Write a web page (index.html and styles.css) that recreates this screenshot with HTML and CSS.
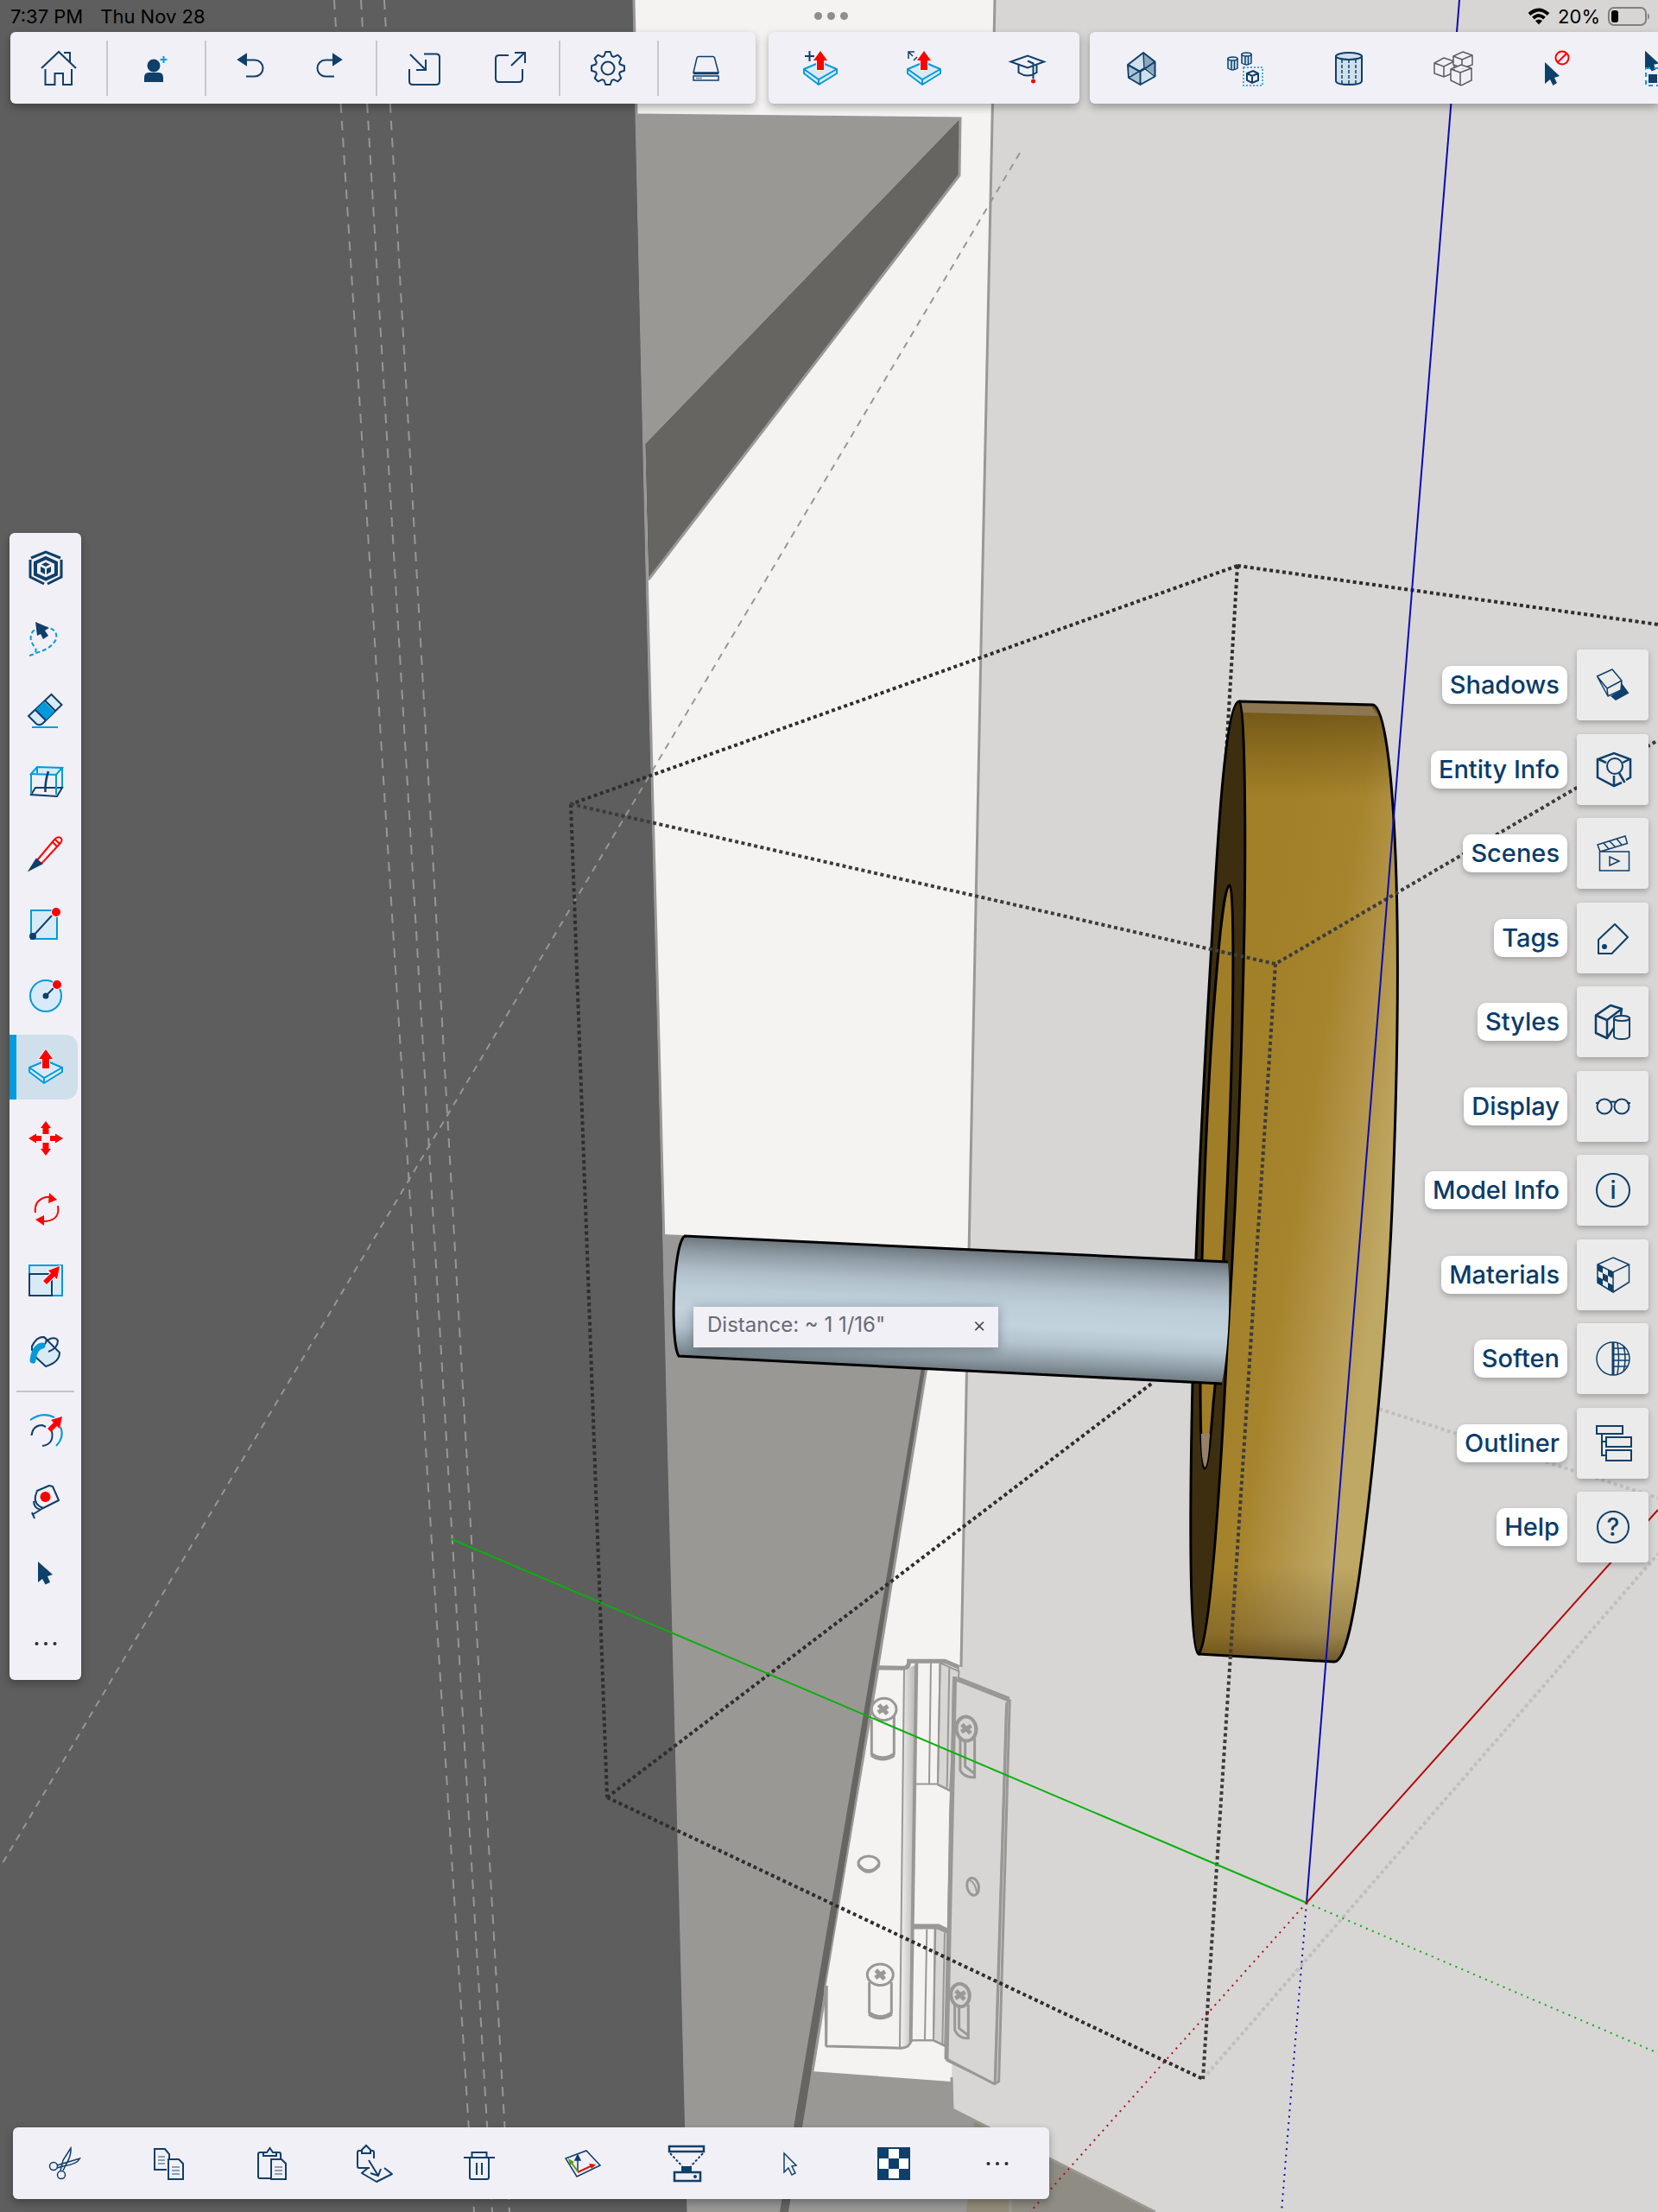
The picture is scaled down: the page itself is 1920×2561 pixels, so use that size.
FILE: index.html
```html
<!DOCTYPE html>
<html lang="en">
<head>
<meta charset="utf-8">
<meta name="viewport" content="width=device-width, initial-scale=1">
<title>Model editor</title>
<link rel="stylesheet" href="styles.css">
</head>
<body>
<main class="app">
  <!-- Modelling canvas -->
  <div class="canvas">
    <svg class="scene" viewBox="0 0 1920 2561" preserveAspectRatio="xMinYMin slice" aria-hidden="true">
      <defs>
        <linearGradient id="rod" gradientUnits="userSpaceOnUse" x1="1100" y1="1446" x2="1093" y2="1587">
          <stop offset="0" stop-color="#6c757c"/><stop offset=".12" stop-color="#8f9ba4"/><stop offset=".28" stop-color="#b0bec9"/><stop offset=".42" stop-color="#bccdd8"/><stop offset=".6" stop-color="#c2d3de"/><stop offset=".74" stop-color="#b4c4cf"/><stop offset=".9" stop-color="#8a98a1"/><stop offset="1" stop-color="#6c777e"/>
        </linearGradient>
        <linearGradient id="gold" gradientUnits="userSpaceOnUse" x1="1430" y1="1340" x2="1615" y2="1370">
          <stop offset="0" stop-color="#a28028"/><stop offset=".42" stop-color="#a6842d"/><stop offset=".7" stop-color="#b3954a"/><stop offset="1" stop-color="#bfa864"/>
        </linearGradient>
        <linearGradient id="goldShade" x1="0" y1="0" x2="0" y2="1">
          <stop offset="0" stop-color="#4b3508" stop-opacity=".6"/><stop offset=".1" stop-color="#5a3f0a" stop-opacity="0"/><stop offset=".9" stop-color="#5a4520" stop-opacity="0"/><stop offset=".97" stop-color="#5a4520" stop-opacity=".35"/><stop offset="1" stop-color="#4b3510" stop-opacity=".7"/>
        </linearGradient>
        <linearGradient id="curl"><stop offset="0" stop-color="#f4f3f1"/><stop offset="1" stop-color="#b4b3b0"/></linearGradient>
        <g id="cross"><path d="M-15 -13L15 13M-17 9L17 -9" stroke-width="5" vector-effect="non-scaling-stroke"/></g>
      </defs>

      <rect width="1920" height="2561" fill="#d7d6d4"/>
      <!-- cabinet side and back -->
      <polygon points="733,0 1152,0 1137,700 1123,1400 1113,1860 1102,2412 780,2412" fill="#f4f3f1"/>
      <polygon points="735,133 1112,137 747,514" fill="#999895"/>
      <polygon points="1112,137 1111,203 751,672 747,514" fill="#666562"/>
      <path d="M736 133L1112 137L1111 203L751 671" class="edge"/>
      <polygon points="768,1429 790,1430 1073,1500 1073,1583 1028,1860 940,2398 1101,2410 1103,2442 1338,2561 780,2561" fill="#999895"/>
      <polygon points="1067,1583 1073,1583 1028,1860 929,2463 913,2561 903,2561 919,2463 1021,1860" fill="#666562"/>
      <path d="M1073 1583L1028 1860L941 2398" class="edge"/>
      <polygon points="1128,2455 1148,2465 1170,2476 1170,2561 1119,2561" fill="#928b78"/>
      <polygon points="1170,2476 1338,2561 1170,2561" fill="#8f8c84"/>
      <path d="M1125 2453L1117 2561M1170 2476V2561" class="edge"/>
      <path d="M1152 0L1137 700L1123 1400L1113 1930M1102 2405L1103 2442L1338 2561" class="edge"/>
      <polygon points="0,0 733,0 749,700 767,1400 773,1660 793,2440 796,2561 0,2561" fill="#5e5e5e"/>
      <path d="M734 0L750 700L768 1400L774 1660L794 2440L797 2561" class="edge"/>

      <!-- hinge -->
      <g transform="translate(900 1860) scale(.3333 .3954)" class="hinge">
        <path d="M352 182L440 183Q460 180 460 160H580L630 180L605 600L590 1290L540 1270H465Q458 1292 430 1293L170 1287L165 1120Z" fill="#f4f3f1"/>
        <path d="M441 185L484 170L464 1275Q450 1292 426 1292Z" fill="url(#curl)" stroke="none"/>
        <path d="M566 165L632 190L600 540L558 522Z M548 940L592 955L583 1285L543 1270Z" fill="#d7d6d4"/>
        <path d="M352 179L440 180Q458 180 458 160H582L632 178" stroke-width="5"/>
        <path d="M484 165L464 1275" stroke-width="4"/>
        <path d="M441 185L426 1292M534 165L528 520M566 165L558 520L600 538M598 180L590 530M480 520H560M520 945L513 1268M550 940L543 1270L583 1286M582 955L574 1280M465 1270H543"/>
        <path d="M470 937H560L592 950" stroke-width="6"/>
        <path d="M170 1287L172 1110M170 1287L430 1293Q462 1292 466 1268" stroke-width="3"/>
        <path d="M625 215L805 272L795 290L755 1397L590 1330L612 215Z" fill="#d7d6d4"/>
        <path d="M625 212L805 272" stroke-width="6"/>
        <path d="M618 205L602 600L588 1325L755 1398L770 1390L808 272M798 280L758 1390" stroke-width="3"/>
        <path d="M617 205L588 1325" stroke-width="5"/>
        <path d="M328 330V432Q366 455 406 432V320M320 1100V1190Q358 1212 397 1190V1100" fill="#f4f3f1" stroke-width="3"/>
        <path d="M328 434Q366 456 406 434M320 1192Q358 1214 397 1192" stroke-width="5"/>
        <ellipse cx="371" cy="301" rx="43" ry="32" fill="#f4f3f1" stroke-width="3"/>
        <ellipse cx="358" cy="1078" rx="45" ry="31" fill="#f4f3f1" stroke-width="3"/>
        <ellipse cx="318" cy="752" rx="36" ry="21" fill="#f4f3f1" stroke-width="3"/>
        <path d="M282 756Q318 796 354 756" stroke-width="4"/>
        <path d="M636 380V480Q650 502 686 500V385M653 390V468L686 490M617 1165V1240Q632 1266 664 1264V1165M632 1170V1235L664 1256" stroke-width="3"/>
        <ellipse cx="657" cy="358" rx="34" ry="36" fill="#d7d6d4" stroke-width="4" transform="rotate(-30 657 358)"/>
        <ellipse cx="636" cy="1138" rx="32" ry="34" fill="#d7d6d4" stroke-width="4" transform="rotate(-30 636 1138)"/>
        <ellipse cx="680" cy="820" rx="20" ry="26" stroke-width="3" transform="rotate(-20 680 820)"/>
        <path d="M668 800Q690 810 694 840"/>
        <use href="#cross" x="368" y="301"/><use href="#cross" x="358" y="1078"/><use href="#cross" x="657" y="358"/><use href="#cross" x="636" y="1138"/>
      </g>

      <!-- construction guides -->
      <g class="guide">
        <path d="M387 0L549 2561M418 0L570 2561M445 0L590 2561" stroke-dasharray="11 9"/>
        <path d="M1181 177L0 2162" stroke-dasharray="8 7"/>
      </g>

      <!-- hidden side of the bounding box -->
      <g class="bounds bounds-far"><path d="M1393 2407L1920 1799M1590 1629L1920 1734"/></g>
      <g class="bounds">
        <path d="M1433 655L1920 723M1433 655L661 931M1433 655L1418 905M661 931L703 2081M703 2081L1393 2407M703 2081L1336 1600"/>
      </g>

      <!-- wheel -->
      <path d="M1435 812L1590 816C1603 819 1612 890 1616 990C1620 1090 1619 1230 1612 1400C1606 1540 1590 1710 1574 1825C1566 1880 1557 1924 1545 1924L1388 1915Z" fill="url(#gold)"/>
      <path d="M1435 812L1590 816C1603 819 1612 890 1616 990C1620 1090 1619 1230 1612 1400C1606 1540 1590 1710 1574 1825C1566 1880 1557 1924 1545 1924L1388 1915Z" fill="url(#goldShade)"/>
      <path d="M1436 814L1588 818L1596 829L1440 825Z" fill="#8d7752"/>
      <path d="M1435 812L1590 816C1603 819 1612 890 1616 990C1620 1090 1619 1230 1612 1400C1606 1540 1590 1710 1574 1825C1566 1880 1557 1924 1545 1924L1388 1915" fill="none" stroke="#000" stroke-width="3"/>
      <path d="M1435 812C1441 815 1443 930 1441 1073C1438 1220 1432 1390 1421 1560C1413 1720 1401 1900 1388 1915C1378 1912 1377 1780 1381 1600C1384 1420 1396 1200 1410 980C1416 890 1424 812 1435 812Z" fill="#3d2e10" stroke="#000" stroke-width="3"/>
      <path d="M1424 1025C1429 1030 1429 1150 1425 1270C1421 1400 1412 1560 1405 1625C1402 1665 1399 1698 1395 1700C1389 1695 1389 1580 1392 1460C1395 1340 1402 1190 1413 1081C1417 1045 1420 1026 1424 1025Z" fill="#a07e28" stroke="#000" stroke-width="3"/>
      <path d="M1391 1660H1401Q1399 1698 1395 1699Q1391 1690 1391 1660Z" fill="#95816a"/>

      <!-- axle -->
      <path d="M793 1431L1422 1461C1425 1500 1423 1560 1415 1601L786 1570C776 1550 779 1440 793 1431Z" fill="url(#rod)"/>
      <path d="M1422 1461L793 1431C779 1440 776 1555 786 1570L1415 1602" fill="none" stroke="#000" stroke-width="3"/>

      <!-- near side of the bounding box -->
      <g class="bounds bounds-near"><path d="M661 931L1477 1116L1920 857M1477 1116L1393 2407"/></g>

      <!-- axes -->
      <path d="M1690 0L1513 2203" stroke="#0b0bb4" stroke-width="2"/>
      <path d="M1513 2203L1484 2561" class="axis-neg" stroke="#0b0bb4"/>
      <path d="M523 1782L1513 2203" stroke="#0ab00a" stroke-width="2"/>
      <path d="M1513 2203L1920 2377" class="axis-neg" stroke="#0ab00a"/>
      <path d="M1513 2203L1920 1748" stroke="#b40b0b" stroke-width="2"/>
      <path d="M1513 2203L1193 2561" class="axis-neg" stroke="#b40b0b"/>
    </svg>

    <div class="measure">
      <output class="measure-value">Distance: ~ 1 1/16"</output>
      <button class="measure-close" aria-label="Close">×</button>
    </div>
  </div>

  <header class="top">
    <div class="status">
      <span class="status-time">7:37 PM</span><span class="status-date">Thu Nov 28</span>
      <span class="status-dots"><i></i><i></i><i></i></span>
      <span class="status-right">
        <svg width="26" height="20" viewBox="0 0 26 20" fill="none" stroke="#000" stroke-width="4"><path d="M2 7.500Q13 -2.500 24 7.500M6.500 12Q13 6 19.500 12"/><path d="M13 19.500L9 15Q13 12 17 15Z" fill="#000" stroke="none"/></svg>
        <span>20%</span>
        <svg width="50" height="24" viewBox="0 0 50 24"><rect x="1" y="2" width="43" height="20" rx="6" fill="none" stroke="#80807e" stroke-width="2"/><rect x="4" y="5" width="8" height="14" rx="3"/><path d="M46 8Q50 12 46 16Z" fill="#80807e"/></svg>
      </span>
    </div>

    <div class="top-bars">
      <nav class="bar" aria-label="File">
        <div class="group group-home"><button aria-label="Home"><svg class="icon" viewBox="0 0 48 48"><path d="M4 24L24 5L44 24M30 6H37V17M8.500 25V43H19.500V30H29V43H39V25"/></svg></button></div>
        <div class="group group-single"><button aria-label="Invite"><svg class="icon" viewBox="0 0 48 48"><ellipse cx="22" cy="21" rx="6.500" ry="6.500" class="navy"/><path class="navy" d="M12 39V35Q12 30 16 30H28Q32 30 32 35V39Z"/><path class="cy" d="M33.500 10V18M29.500 14H37.500"/></svg></button></div>
        <div class="group group-history">
          <button aria-label="Undo"><svg class="icon" viewBox="0 0 48 48"><path d="M16 14.500H28A9.500 9.500 0 0 1 28 33.500H18"/><path class="navy" d="M9 14L18 8V20Z"/></svg></button>
          <button aria-label="Redo"><svg class="icon" viewBox="0 0 48 48"><path d="M31 14.500H20A9.500 9.500 0 0 0 20 33.500H30"/><path class="navy" d="M38 14L29 8V20Z"/></svg></button>
        </div>
        <div class="group group-share">
          <button aria-label="Import"><svg class="icon" viewBox="0 0 48 48"><path d="M24 7.500H38Q42 7.500 42 11V39Q42 43 38 43H11Q7 43 7 39V25M8 8L26 26M26 14V26H15"/></svg></button>
          <button aria-label="Export"><svg class="icon" viewBox="0 0 48 48"><path d="M22 9H11Q7 9 7 13V36Q7 40 11 40H34Q38 40 38 36V25M25 21L40.500 6M29 6H41V18"/></svg></button>
        </div>
        <div class="group group-single"><button aria-label="Settings"><svg class="icon" viewBox="0 0 48 48"><circle cx="24" cy="24" r="7.500"/><path stroke-linejoin="round" d="M19.500 10L21.300 5H26.700L28.500 10L30.700 10.900L35.500 8.700L39.300 12.500L37.100 17.300L38 19.500L43 21.300V26.700L38 28.500L37.100 30.700L39.300 35.500L35.500 39.300L30.700 37.100L28.500 38L26.700 43H21.300L19.500 38L17.300 37.100L12.500 39.300L8.700 35.500L10.900 30.700L10 28.500L5 26.700V21.300L10 19.500L10.900 17.300L8.700 12.500L12.500 8.700L17.300 10.900Z"/></svg></button></div>
        <div class="group group-single"><button aria-label="Storage"><svg class="icon thin" viewBox="0 0 48 48"><path d="M15 10.500H31.500Q33 10.500 33.500 12L38 29H9L13 12Q13.500 10.500 15 10.500ZM9 30.500H38M9 33H38V38H9Z"/><path d="M12 35.500H19" opacity=".6"/></svg></button></div>
      </nav>

      <nav class="bar" aria-label="Push/Pull options">
        <button aria-label="New face"><svg class="icon" viewBox="0 0 48 48"><use href="#slab"/><path d="M6 10H17M11.500 4V16"/></svg></button>
        <button aria-label="Stretch"><svg class="icon" viewBox="0 0 48 48"><use href="#slab"/><path class="thin" d="M6 13V5H13M6 5L11 10M12 15L16 11"/></svg></button>
        <button aria-label="Learn"><svg class="icon" viewBox="0 0 48 48"><path d="M4.500 16.500L24 9.500L43 16.500L24 23.500ZM13.500 20V29Q24 36 34.500 29V20M24 15.500L30.500 18.500V36"/><circle cx="30.500" cy="39" r="2.500" class="red"/></svg></button>
      </nav>

      <nav class="bar bar-more" aria-label="Selection">
        <button aria-label="X-ray"><svg class="icon" viewBox="0 0 48 48"><path d="M26 6L39.500 16.500V33.500L22.500 43L12 33L8 20Z" fill="#cfe0ec" stroke="none"/><path d="M8 20L22.500 28L22.500 43L12 36Z" fill="#a9c2d4" stroke="none"/><path d="M26 6L28 24L39 31V16.500Z" fill="#8ca8be" stroke="none"/><path stroke-linejoin="round" d="M26 6L8 20L22.500 28L39.500 16.500ZM8 20L9 35L22.500 43V28M22.500 43L39.500 33.500V16.500"/><path class="thin" d="M26 6L27 24L9 35M27 24L39.500 33.500"/></svg></button>
        <button aria-label="Select similar"><svg class="icon thin" viewBox="0 0 48 48"><path fill="#cfe0ec" d="M4 13V24Q9.500 28 15 24V13Z"/><ellipse cx="9.500" cy="13" rx="5.500" ry="2" fill="#cfe0ec"/><path d="M8 15V26M11.500 15V26"/><path fill="#cfe0ec" d="M20 8V18Q25.500 22 31 18V8Z"/><ellipse cx="25.500" cy="8" rx="5.500" ry="2" fill="#cfe0ec"/><path d="M24 10V20M27.500 10V20"/><rect x="22" y="23" width="22" height="21" class="cy" stroke-dasharray="2 2"/><path stroke-width="2" d="M33 27L39 30V38L32 41L26 38V30ZM26 30L32 33L39 30M32 33V41"/></svg></button>
        <button aria-label="Solid"><svg class="icon" viewBox="0 0 48 48"><path fill="#cfe0ec" d="M9 10V39Q10 43 24 43T39 39V10Z"/><ellipse cx="24" cy="10" rx="15" ry="4" fill="#cfe0ec"/><path class="thin" stroke-dasharray="4 2" d="M16 14V42M24 14V43M32 14V42"/></svg></button>
        <button aria-label="Connected"><svg class="icon thin grey" viewBox="0 0 48 48"><path class="boxfill" d="M14 12L26 16V29L14 34L3 30V18ZM3 18L14 22L26 16M14 22V34"/><path class="boxfill" d="M36 5L47 9V20L36 24L25 20V10ZM25 10L35 14L47 9M35 14V24"/><path class="boxfill" d="M34 20L46 24V38L34 44L22 38V25ZM22 25L33 29L46 24M33 29V44"/></svg></button>
        <button aria-label="Deselect"><svg class="icon" viewBox="0 0 48 48"><path class="navy" stroke="none" d="M11 17V42L17 37L20.500 44L25 41L22 35L28 33Z"/><circle cx="31" cy="12" r="7.500" class="redline"/><path class="redline" d="M26 17L36 7"/></svg></button>
        <button aria-label="Select all"><svg class="icon" viewBox="0 0 48 48"><path class="navy" d="M8 6V24L12 21L15 26L18 25L16 19L21 18Z"/><rect x="8" y="24" width="30" height="20" class="cy" stroke-dasharray="5 4"/><path class="navy" d="M12 32H20V40H12ZM25 32H33V40H25Z"/></svg></button>
      </nav>
    </div>
  </header>

  <nav class="bar bar-tools" aria-label="Tools">
    <button aria-label="SketchUp"><svg class="icon" viewBox="0 0 48 48"><path stroke-width="3" d="M7 12L24 5L41 12M42 14V34L26 42M22 42L6 34V14"/><path stroke-width="4" d="M24 12L36 17.500V31L24 36.500L12 31V17.500Z"/><path class="navy" stroke="none" d="M24 17L29 19.500L24 22L19 19.500ZM18 22L23 24.500V31L18 28ZM30 22L25 24.500V31L30 28Z"/></svg></button>
    <button aria-label="Lasso"><svg class="icon" viewBox="0 0 48 48"><path class="cy" stroke-dasharray="5 3" d="M5 43Q15 41 12 34Q3 24 9 15Q16 9 28 11Q38 14 36 24Q30 36 12 40"/><path class="navy" stroke="none" d="M12 4L14 20L18 18L21 24L27 20L23 14L28 11Z"/></svg></button>
    <button aria-label="Eraser"><svg class="icon" viewBox="0 0 48 48"><path fill="#d9eaf7" d="M4 30L30.500 5L42.500 17L21 38Q17 42 13 39Z"/><path fill="#009bdc" stroke="none" d="M12 23L22 13L34 25L24 35Z"/><path d="M12 23L24 35M23 12L35 24"/><path class="cy" d="M8 43H38"/></svg></button>
    <button aria-label="Section"><svg class="icon" viewBox="0 0 48 48"><path fill="none" d="M12 31H43L37 41L7 39Z"/><path class="cy" fill="#d9eaf7" d="M7 15L14 7L43 8L36 16Z"/><path class="cy" d="M7 15V38M43 8V30M36 16V39M14 7V14"/><path stroke-width="2.500" d="M27 12Q23 24 23.500 36"/></svg></button>
    <button aria-label="Line"><svg class="icon" viewBox="0 0 48 48"><path class="redline" d="M14 32L34 8Q38 4 41 6T41 12L19 36ZM32 11L37 16M35 8L40 13"/><path class="navy" d="M5.500 43L13 31L19 36Z"/></svg></button>
    <button aria-label="Rectangle"><svg class="icon" viewBox="0 0 48 48"><rect x="7" y="8" width="30" height="33" class="cy" fill="#d9eaf7"/><path d="M9 38L31 14"/><circle cx="36" cy="10" r="5" class="red halo"/><circle cx="9" cy="38" r="3" class="navy"/></svg></button>
    <button aria-label="Circle"><svg class="icon" viewBox="0 0 48 48"><circle cx="24" cy="24" r="18" class="cy" fill="#d9eaf7"/><path d="M24 24L33 15"/><circle cx="37" cy="11" r="5" class="red halo"/><circle cx="24" cy="24" r="2.500" class="navy"/></svg></button>
    <button class="active" aria-label="Push/Pull" aria-pressed="true"><svg class="icon" viewBox="0 0 48 48"><g id="slab"><path class="cy" fill="#d9eaf7" stroke-linejoin="round" d="M5 25L24 17L43 25V30L22 43L5 30Z"/><path class="cy" d="M5 25L22 37L43 25M22 37V43"/><path class="red halo" d="M24 4L32 15H28V26H20V15H16Z"/></g></svg></button>
    <button aria-label="Move"><svg class="icon" viewBox="0 0 48 48"><path class="red" d="M24 4L30 12H27.500V19H20.500V12H18ZM24 44L30 36H27.500V29H20.500V36H18ZM4 24L13 18.500V21H19V27H13V29.500ZM44 24L35 18.500V21H29V27H35V29.500Z"/></svg></button>
    <button aria-label="Rotate"><svg class="icon" viewBox="0 0 48 48"><path class="redline" d="M12 28Q10 14 24 10H30M38 20Q41 36 24 38H20"/><path class="red" d="M28 5L37 13L27 17ZM22 31L12 36L22 43Z"/></svg></button>
    <button aria-label="Scale"><svg class="icon" viewBox="0 0 48 48"><rect x="5" y="6" width="38" height="35" class="cy" fill="#d9eaf7"/><rect x="5" y="16" width="26" height="25"/><path class="red halo" d="M40 7L37 22L34 19L25 28L21 24L30 15L27 12Z"/></svg></button>
    <button aria-label="Paint"><svg class="icon" viewBox="0 0 48 48"><path fill="#d9eaf7" stroke-linejoin="round" d="M8 18Q14 6 22 7L40 25Q40 36 24 41L11 29Z"/><path fill="#f1f0f6" d="M8 18Q13 7 21 7Q29 10 20 18Q13 24 8 22Z"/><path d="M27 24Q38 20 38 11Q34 5 24 12"/><path d="M20 17Q11 18 9 34" class="cy" stroke-width="7" stroke-linecap="round"/></svg></button>
    <hr>
    <button aria-label="Offset"><svg class="icon" viewBox="0 0 48 48"><path class="cy" d="M6 12Q20 2 34 9M41 20Q46 32 36 42"/><path d="M7.500 30Q9 18 20 18L24 20M31 25Q34 40 20 42"/><path class="red" d="M43 8L40 22L37 19L30 26L26 22L33 15L30 12Z"/></svg></button>
    <button aria-label="Tape measure"><svg class="icon" viewBox="0 0 48 48"><path stroke-linejoin="round" d="M14 12L28 6L32 7L39 23L21 32Q10 28 12 18ZM10 24Q10 32 18 34M21 32L8 40M8 37L11 44"/><circle cx="23.500" cy="19" r="6" class="red"/></svg></button>
    <button aria-label="Select"><svg class="icon" viewBox="0 0 48 48"><path class="navy" stroke="none" d="M15 11V35L20 31L23.500 37.500L29 35L26 28L32 26Z"/></svg></button>
    <button aria-label="More tools"><svg class="icon dots" viewBox="0 0 48 48"><circle cx="13.500" cy="24" r="2"/><circle cx="24" cy="24" r="2"/><circle cx="34.500" cy="24" r="2"/></svg></button>
  </nav>

  <aside class="panels" aria-label="Panels">
    <button><span class="tag">Shadows</span><span class="tile"><svg class="icon" viewBox="0 0 48 48"><path class="navy" stroke="none" d="M34 22L42.500 33.500L27 42L21 37L33 30Z"/><path stroke-width="1.500" stroke-linejoin="round" fill="#ebebeb" d="M5.500 14L23 6L34 19L33 30L18 37ZM5.500 14L17 28L34 19M17 28L18 37"/></svg></span></button>
    <button><span class="tag">Entity Info</span><span class="tile"><svg class="icon" viewBox="0 0 48 48"><path stroke-width="2.500" d="M34 39L25 43L6 33V12L25 5L44 12V33L39 36M25 31V42M7 12L16 16M43 12L35 16"/><circle cx="26" cy="20" r="9"/><path stroke-width="2.500" d="M31 28L37.500 39"/></svg></span></button>
    <button><span class="tag">Scenes</span><span class="tile"><svg class="icon thin" viewBox="0 0 48 48"><path d="M8.500 22H42.500V44H8.500ZM20 28L31 33L20 38ZM6 14L38 4L40.500 12.500L9 22ZM13 12L19 19M20 10L27 17M28 7L34 14"/></svg></span></button>
    <button><span class="tag">Tags</span><span class="tile"><svg class="icon" viewBox="0 0 48 48"><path stroke-linejoin="round" d="M26 8L41 23L22.500 42H7V26Z"/><circle cx="14" cy="34" r="2" class="navy"/></svg></span></button>
    <button><span class="tag">Styles</span><span class="tile"><svg class="icon" viewBox="0 0 48 48"><path stroke-width="2.500" stroke-linejoin="round" d="M4 16.500L21 5L34 9L33 16M34 9L17 22L4 16.500V37L17 43L25 31M17 22V43"/><path fill="#ebebeb" d="M25 20V41Q26 44 34 44T43 41V20Z"/><ellipse cx="34" cy="20" rx="9" ry="3" fill="#ebebeb"/></svg></span></button>
    <button><span class="tag">Display</span><span class="tile"><svg class="icon" viewBox="0 0 48 48"><circle cx="14" cy="24" r="8.500"/><circle cx="34" cy="24" r="8.500"/><path d="M4 20H8M40 20H44M20 19Q24 18 28 19"/></svg></span></button>
    <button><span class="tag">Model Info</span><span class="tile"><svg class="icon" viewBox="0 0 48 48"><circle cx="24" cy="24" r="19"/><text x="24" y="34" class="glyph">i</text></svg></span></button>
    <button><span class="tag">Materials</span><span class="tile"><svg class="icon thin" viewBox="0 0 48 48"><path d="M24 4L42.500 12V32.500L24 44L6 33V12ZM6 12L24 21L42.500 12M24 21V44"/><path class="navy" stroke="none" d="M6 12L12 15V22L6 19ZM12 22L18 25V33L12 30ZM18 18L24 21V28L18 25ZM6 26L12 29V37L6 33ZM18 33L24 36V44L18 41Z"/></svg></span></button>
    <button><span class="tag">Soften</span><span class="tile"><svg class="icon thin" viewBox="0 0 48 48"><circle cx="24" cy="24" r="19"/><path stroke-width="3" d="M24 5V43"/><path d="M29 6Q32 24 29 42M36 9Q40 24 36 39M24 12H38M24 19H42M24 26H43M24 33H41"/></svg></span></button>
    <button><span class="tag">Outliner</span><span class="tile"><svg class="icon" viewBox="0 0 48 48"><path d="M5 4H35V13H5ZM16 17H45V28H16ZM16 32H45V44H16ZM11 13V38H16M11 22H16"/></svg></span></button>
    <button><span class="tag">Help</span><span class="tile"><svg class="icon" viewBox="0 0 48 48"><circle cx="24" cy="24" r="18"/><text x="24" y="34" class="glyph">?</text></svg></span></button>
  </aside>

  <nav class="bar bar-edit" aria-label="Edit">
    <button aria-label="Cut"><svg class="icon thin" viewBox="0 0 48 48"><circle cx="11" cy="27" r="4.500"/><circle cx="20" cy="37" r="4.500"/><path d="M15 26L41.500 18Q38 25 22 27L15 29M19 32L22 20L31 6Q32 14 25 26L22 32"/></svg></button>
    <button aria-label="Copy"><svg class="icon" viewBox="0 0 48 48"><path d="M22 31H8V7H20L25 13V18M24 19H36L41 24V42H24Z"/><path class="thin" opacity=".6" d="M12 16H20M12 20H20M12 24H20M28 28H37M28 32H37M28 36H37"/></svg></button>
    <button aria-label="Paste"><svg class="icon" viewBox="0 0 48 48"><path d="M22 41H10Q8 41 8 39V13Q8 11 10 11H14M29 11H32Q34 11 34 13V18M14 15V11H18L21.500 6L25 11H29V15ZM23 19H35L40 24V42H23Z"/><path class="thin" opacity=".6" d="M27 28H36M27 32H36M27 36H36"/></svg></button>
    <button aria-label="Paste in place"><svg class="icon" viewBox="0 0 48 48"><path d="M17 29H5Q3 29 3 27V11Q3 9 5 9H8M18 9H20Q22 9 22 11V18M8 12V8L13 3L18 8V12Z"/><path stroke-linejoin="round" d="M15 29L8 35L25 45L43 36L34 29"/><path d="M16 20L27 38M18 35L27 38L30 30"/></svg></button>
    <button aria-label="Delete"><svg class="icon" viewBox="0 0 48 48"><path d="M6 17H42M15.500 17V11H32.500V17M13 18V40Q13 42 15 42H33Q35 42 35 40V18M21 23V37M27 23V37"/></svg></button>
    <button aria-label="Axes"><svg class="icon thin" viewBox="0 0 48 48"><path d="M4 18L28 9L44 26L17 39ZM18 33V17"/><path class="navy" d="M18 14L21 20H15Z"/><path d="M18 33L10 22" stroke="#5a9a1a" stroke-width="2"/><path d="M7 18L14 22L9 26Z" fill="#5a9a1a" stroke="none"/><path d="M18 34L33 27" stroke="#d4151b" stroke-width="2"/><path class="red" d="M39 25L31 24L34 30Z"/></svg></button>
    <button aria-label="Flatten"><svg class="icon" viewBox="0 0 48 48"><path stroke-width="2.500" d="M4 4H44V10H4ZM10 34H40V44H10Z"/><path stroke-dasharray="3 2" d="M5 12L19 27M43 12L29 27"/><path class="navy" d="M19 28H29V33H19Z"/><circle cx="34" cy="39" r="1" class="navy"/></svg></button>
    <button aria-label="Select mode"><svg class="icon thin" viewBox="0 0 48 48"><path d="M17 12V34L22 29L26 37L30 35L26 27L31 26Z"/></svg></button>
    <button aria-label="Texture"><svg class="icon" viewBox="0 0 48 48"><path fill="#fff" d="M6 6H42V42H6Z"/><path fill="#0f3f6b" stroke="none" d="M6 6H18V18H6ZM30 6H42V18H30ZM18 18H30V30H18ZM6 30H18V42H6ZM30 30H42V42H30Z"/></svg></button>
    <button aria-label="More edit actions"><svg class="icon dots" viewBox="0 0 48 48"><circle cx="13.500" cy="24" r="2"/><circle cx="24" cy="24" r="2"/><circle cx="34.500" cy="24" r="2"/></svg></button>
  </nav>
</main>
</body>
</html>
```

FILE: styles.css
```css
* { box-sizing: border-box; }

body {
  margin: 0;
  font-family: Inter, "Liberation Sans", sans-serif;
  color: #000;
}

button {
  border: 0;
  padding: 0;
  background: none;
  font: inherit;
  color: inherit;
  cursor: pointer;
}

/* Every layer shares one grid cell, floating over the canvas */
.app {
  display: grid;
  grid-template: minmax(100vh, auto) / minmax(0, 1fr);
  overflow: hidden;
}
.app > * { grid-area: 1 / 1; z-index: 1; }

/* Canvas */
.app > .canvas { position: relative; z-index: 0; overflow: hidden; background: #d7d6d4; }
.scene { position: absolute; inset: 0; width: 100%; height: 100%; }
.edge { fill: none; stroke: #999895; stroke-width: 3; }
.hinge { fill: none; stroke: #999895; stroke-width: 2; }
.hinge * { vector-effect: non-scaling-stroke; }
.guide { fill: none; stroke: #979795; stroke-width: 2; }
.bounds { fill: none; stroke: #2e2e2e; stroke-width: 4; stroke-dasharray: 4 3.5; }
.bounds-near { stroke: #3c3c3c; }
.bounds-far { stroke: #c0bfbd; }
.axis-neg { stroke-width: 2; stroke-dasharray: 2 5.5; }

.measure {
  position: absolute;
  left: 803px;
  top: 1513px;
  display: flex;
  align-items: center;
  justify-content: space-between;
  width: 353px;
  height: 47px;
  padding: 0 12px 6px 16px;
  background: #f1f0f6;
  box-shadow: 0 2px 12px rgba(0, 0, 0, .3);
  color: #6a6976;
  font-size: 24px;
}
.measure-close { padding: 0 2px; color: #3c3c4a; font-weight: 300; }

/* Status strip and top bars */
.top { align-self: start; display: flex; flex-direction: column; min-width: 0; }
.status {
  display: grid;
  grid-template-columns: auto auto 1fr auto;
  align-items: center;
  height: 37px;
  padding: 0 8px 0 12px;
  font-size: 22px;
}
.status-dots {
  grid-area: 1 / 1 / 2 / -1;
  display: flex;
  gap: 6px;
  justify-self: center;
}
.status-dots i { width: 9px; height: 9px; border-radius: 50%; background: #8e8e8c; }
.status-time { grid-area: 1 / 1; }
.status-date { grid-area: 1 / 2; margin-left: 20px; }
.status-right { grid-area: 1 / 4; display: flex; align-items: center; gap: 9px; }

.top-bars { display: flex; gap: 12px; padding-left: 12px; }

.bar {
  display: flex;
  flex: none;
  border-radius: 6px;
  background: #f1f0f6;
  box-shadow: 0 4px 10px rgba(0, 0, 0, .3);
}
.bar button { display: grid; place-items: center; flex: none; width: 120px; height: 83px; }
.top-bars .bar:first-child { margin-right: 3px; }
.bar-more { flex: 1 1 0; min-width: 0; border-radius: 6px 0 0 6px; }

.group { position: relative; display: flex; }
.group + .group { background: linear-gradient(#c8c8cc, #c8c8cc) left center / 2px 64px no-repeat; }
.bar .group-home button { width: 111px; }
.bar .group-single button { width: 114px; }
.group-history { padding: 0 9px; }
.bar .group-history button { width: 90px; }
.group-share { padding: 0 6px; }
.bar .group-share button { width: 100px; }

/* Left tool bar */
.bar-tools {
  align-self: center;
  justify-self: start;
  flex-direction: column;
  width: 83px;
  height: 1328px;
  margin-left: 11px;
}
.bar-tools button { flex: 1 1 0; width: 83px; height: auto; }
.bar-tools hr { width: 67px; height: 2px; margin: 3px 8px; border: 0; background: #c4c4c8; }
.bar-tools .active {
  flex: 0 0 75px;
  width: 79px;
  margin: 4px 0;
  border-left: 8px solid #009bdc;
  border-radius: 0 14px 14px 0;
  padding-right: 4px;
  background: #cfdfec;
}

/* Right panels */
.panels {
  align-self: center;
  justify-self: end;
  display: flex;
  flex-direction: column;
  justify-content: space-between;
  align-items: flex-end;
  height: 1057px;
  margin-right: 11px;
}
.panels button { display: flex; align-items: center; gap: 11px; }
.tag {
  padding: 0 9px;
  border-radius: 10px;
  background: #fff;
  box-shadow: 0 3px 6px rgba(0, 0, 0, .25);
  color: #0a3c69;
  font-size: 29px;
  font-weight: 500;
  line-height: 44px;
}
.tile {
  display: grid;
  place-items: center;
  width: 83px;
  height: 82px;
  border-radius: 4px;
  background: #ebebeb;
  box-shadow: 0 3px 6px rgba(0, 0, 0, .25);
}

/* Bottom edit bar */
.bar-edit { align-self: end; justify-self: start; margin: 0 0 15px 15px; }

/* Icons */
.icon { display: block; width: 48px; height: 48px; fill: none; stroke: #0f3f6b; stroke-width: 2; }
.thin { stroke-width: 1.5; }
.grey { stroke: #5a5a63; }
.boxfill { fill: #f1f0f6; }
.navy { fill: #0f3f6b; }
.cy { stroke: #009bdc; }
.red { fill: #f00; stroke: none; }
.redline { stroke: #f00; }
.halo { stroke: #f1f0f6; stroke-width: 2; paint-order: stroke; }
.dots circle { fill: #2a2a3c; stroke: none; }
.glyph { fill: #0f3f6b; stroke: none; font-size: 28px; font-weight: 500; text-anchor: middle; }
```
